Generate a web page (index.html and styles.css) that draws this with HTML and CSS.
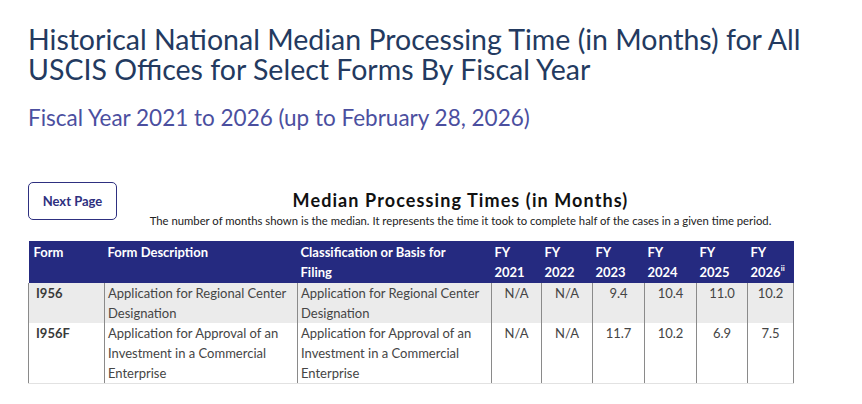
FILE: index.html
```html
<!DOCTYPE html>
<html lang="en">
<head>
<meta charset="utf-8">
<title>Historical National Median Processing Time</title>
<link rel="stylesheet" href="styles.css">
</head>
<body>
<main class="page">
  <h1 class="title">Historical National Median Processing Time (in Months) for All USCIS Offices for Select Forms By Fiscal Year</h1>
  <h2 class="subtitle">Fiscal Year 2021 to 2026 (up to February 28, 2026)</h2>
  <div class="toolbar">
    <button class="next-btn" type="button">Next Page</button>
    <div class="caption">
      <div class="caption-title">Median Processing Times (in Months)</div>
      <div class="caption-note">The number of months shown is the median. It represents the time it took to complete half of the cases in a given time period.</div>
    </div>
  </div>
  <table class="data">
    <colgroup>
      <col class="c-form"><col class="c-desc"><col class="c-class">
      <col class="c-y1"><col class="c-y2"><col class="c-y3"><col class="c-y4"><col class="c-y5"><col class="c-y6">
    </colgroup>
    <thead>
      <tr>
        <th>Form</th>
        <th>Form Description</th>
        <th class="wrap">Classification or Basis for Filing</th>
        <th>FY 2021</th>
        <th>FY 2022</th>
        <th>FY 2023</th>
        <th>FY 2024</th>
        <th>FY 2025</th>
        <th>FY 2026<sup class="fn">ii</sup></th>
      </tr>
    </thead>
    <tbody>
      <tr class="odd">
        <td class="form">I956</td>
        <td>Application for Regional Center Designation</td>
        <td>Application for Regional Center Designation</td>
        <td class="num">N/A</td>
        <td class="num">N/A</td>
        <td class="num">9.4</td>
        <td class="num">10.4</td>
        <td class="num">11.0</td>
        <td class="num">10.2</td>
      </tr>
      <tr class="last">
        <td class="form">I956F</td>
        <td>Application for Approval of an Investment in a Commercial Enterprise</td>
        <td>Application for Approval of an Investment in a Commercial Enterprise</td>
        <td class="num">N/A</td>
        <td class="num">N/A</td>
        <td class="num">11.7</td>
        <td class="num">10.2</td>
        <td class="num">6.9</td>
        <td class="num">7.5</td>
      </tr>
    </tbody>
  </table>
</main>
</body>
</html>
```
FILE: styles.css
```css
html, body {
  margin: 0;
  padding: 0;
  background: #ffffff;
}
body {
  font-family: "Lato", "Open Sans", "Liberation Sans", sans-serif;
}
.page {
  padding: 24px 58px 0 28px;
}
.title {
  margin: 0;
  font-weight: 400;
  font-size: 28.5px;
  line-height: 30px;
  color: #233a60;
}
.subtitle {
  margin: 21px 0 0;
  font-weight: 400;
  font-size: 22.5px;
  line-height: 26px;
  color: #4b4f9f;
}
.toolbar {
  display: flex;
  align-items: flex-start;
  margin-top: 51px;
}
.next-btn {
  flex: none;
  width: 89px;
  height: 38px;
  border: 1.5px solid #2e3080;
  border-radius: 5px;
  background: #fff;
  color: #2e3080;
  font-family: inherit;
  font-weight: 700;
  font-size: 13px;
  padding: 0;
}
.caption {
  flex: 1;
  text-align: center;
  padding-top: 7px;
}
.caption-title {
  font-size: 18px;
  line-height: 22px;
  font-weight: 700;
  letter-spacing: 1.1px;
  color: #111;
}
.caption-note {
  margin-top: 3px;
  font-size: 11.3px;
  line-height: 14px;
  color: #222;
}
.data {
  margin-top: 13px;
  border-collapse: collapse;
  table-layout: fixed;
  width: 765px;
  font-size: 13px;
  line-height: 20px;
}
.c-form { width: 76px; }
.c-desc { width: 193px; }
.c-class { width: 194px; }
.c-y1 { width: 50px; }
.c-y2 { width: 51px; }
.c-y3 { width: 52px; }
.c-y4 { width: 52px; }
.c-y5 { width: 51px; }
.c-y6 { width: 46px; }
.data thead th {
  background: #252a80;
  color: #fff;
  font-weight: 700;
  text-align: left;
  vertical-align: top;
  padding: 1px 3px 1px 3px;
  border: 0;
}
.data thead th:first-child {
  padding-left: 5px;
}
.data thead th.wrap {
  padding-right: 20px;
}
.fn {
  font-size: 8px;
  line-height: 0;
  vertical-align: 6px;
}
.data td {
  color: #454545;
  vertical-align: top;
  padding: 0 3px 0 3px;
  border-left: 1px solid #8a8a8a;
  border-right: 1px solid #8a8a8a;
}
.data tr.last td {
  border-bottom: 1px solid #e2e2e2;
}
.data tr.odd td {
  background: #ebebeb;
}
.data td.form {
  font-weight: 700;
  padding-left: 7px;
  color: #3a3a3a;
}
.data td.num {
  text-align: center;
}
```
